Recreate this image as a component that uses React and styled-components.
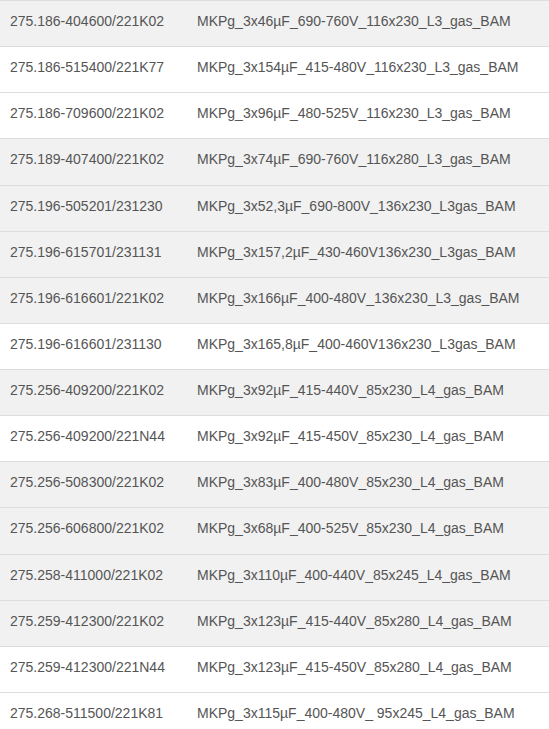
import React from "react";
import styled, { createGlobalStyle } from "styled-components";

const Global = createGlobalStyle`
  html, body { margin: 0; padding: 0; background: #fff; }
  body { font-family: "Liberation Sans", Arial, sans-serif; }
`;

const rows = [
  ["275.186-404600/221K02", "MKPg_3x46µF_690-760V_116x230_L3_gas_BAM", true],
  ["275.186-515400/221K77", "MKPg_3x154µF_415-480V_116x230_L3_gas_BAM", false],
  ["275.186-709600/221K02", "MKPg_3x96µF_480-525V_116x230_L3_gas_BAM", false],
  ["275.189-407400/221K02", "MKPg_3x74µF_690-760V_116x280_L3_gas_BAM", true],
  ["275.196-505201/231230", "MKPg_3x52,3µF_690-800V_136x230_L3gas_BAM", true],
  ["275.196-615701/231131", "MKPg_3x157,2µF_430-460V136x230_L3gas_BAM", true],
  ["275.196-616601/221K02", "MKPg_3x166µF_400-480V_136x230_L3_gas_BAM", true],
  ["275.196-616601/231130", "MKPg_3x165,8µF_400-460V136x230_L3gas_BAM", false],
  ["275.256-409200/221K02", "MKPg_3x92µF_415-440V_85x230_L4_gas_BAM", true],
  ["275.256-409200/221N44", "MKPg_3x92µF_415-450V_85x230_L4_gas_BAM", false],
  ["275.256-508300/221K02", "MKPg_3x83µF_400-480V_85x230_L4_gas_BAM", true],
  ["275.256-606800/221K02", "MKPg_3x68µF_400-525V_85x230_L4_gas_BAM", true],
  ["275.258-411000/221K02", "MKPg_3x110µF_400-440V_85x245_L4_gas_BAM", true],
  ["275.259-412300/221K02", "MKPg_3x123µF_415-440V_85x280_L4_gas_BAM", true],
  ["275.259-412300/221N44", "MKPg_3x123µF_415-450V_85x280_L4_gas_BAM", false],
  ["275.268-511500/221K81", "MKPg_3x115µF_400-480V_ 95x245_L4_gas_BAM", false],
];

const Table = styled.div`
  display: flex;
  flex-direction: column;
  width: 549px;
`;

const Row = styled.div`
  display: grid;
  grid-template-columns: 187px 1fr;
  border-top: 1px solid #dddddd;
  background: ${(p) => (p.$shaded ? "#f1f1f1" : "#ffffff")};
`;

const Cell = styled.div`
  padding: 10px 10px 14.13px 10px;
  font-size: 14px;
  line-height: 21px;
  color: #555555;
  white-space: nowrap;
`;

export default function App() {
  return (
    <>
      <Global />
      <Table>
        {rows.map(([code, name, shaded]) => (
          <Row key={code + name} $shaded={shaded}>
            <Cell>{code}</Cell>
            <Cell>{name}</Cell>
          </Row>
        ))}
      </Table>
    </>
  );
}
